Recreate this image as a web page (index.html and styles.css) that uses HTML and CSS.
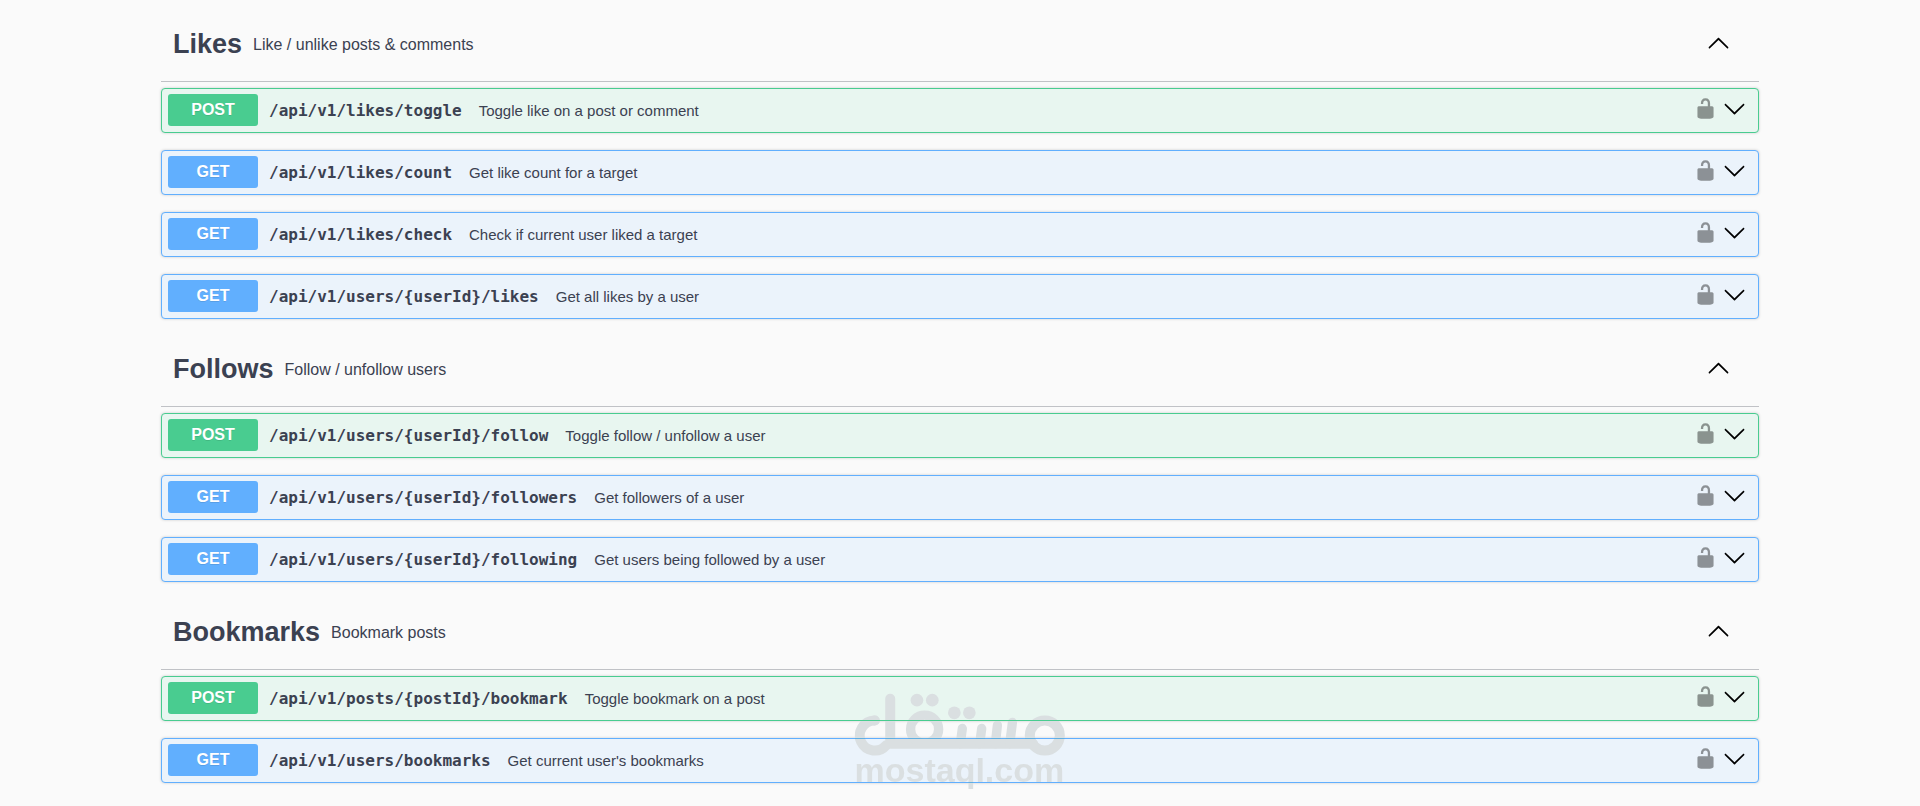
FILE: index.html
```
<!DOCTYPE html>
<html lang="en">

<head>
  <meta charset="UTF-8" />
  <title>API Docs</title>
  <link rel="stylesheet" href="styles.css">
</head>

<body>
  <!-- shared icons -->
  <svg class="sprite" aria-hidden="true">
    <symbol id="arrow-down" viewBox="0 0 20 20">
      <path d="M17.418 6.109c.272-.268.709-.268.979 0s.271.701 0 .969l-7.908 7.83c-.27.268-.707.268-.979 0l-7.908-7.83c-.27-.268-.27-.701 0-.969.271-.268.709-.268.979 0L10 13.25l7.418-7.141z" />
    </symbol>
    <symbol id="arrow-up" viewBox="0 0 20 20">
      <path d="M17.418 14.908c.272.27.709.27.979 0s.271-.701 0-.969l-7.908-7.83c-.27-.268-.707-.268-.979 0l-7.908 7.83c-.27.268-.27.701 0 .969.271.268.709.268.979 0L10 7.767l7.418 7.141z" />
    </symbol>
    <symbol id="unlocked" viewBox="0 0 20 20">
      <path d="M15.8 8H14V5.6C14 2.703 12.665 1 10 1 7.334 1 6 2.703 6 5.6V6h2v-.801C8 3.754 8.797 3 10 3c1.203 0 2 .754 2 2.199V8H4c-.553 0-1 .646-1 1.199V17c0 .549.428 1.139.951 1.307l1.197.387C5.672 18.861 6.55 19 7.1 19h5.8c.549 0 1.428-.139 1.951-.307l1.196-.387c.524-.167.953-.757.953-1.306V9.199C17 8.646 16.352 8 15.8 8z" />
    </symbol>
  </svg>

  <main class="wrapper">
    <section class="tag-section">
      <div class="tag-header">
        <h3>Likes</h3>
        <p>Like / unlike posts &amp; comments</p>
        <button class="icon-btn" aria-label="Collapse Likes"><svg><use href="#arrow-up" /></svg></button>
      </div>
      <div class="opblock post">
        <button class="summary">
          <span class="method">POST</span>
          <span class="path">/api/v1/likes/toggle</span>
          <span class="description">Toggle like on a post or comment</span>
        </button>
        <button class="icon-btn lock" aria-label="Authorize"><svg><use href="#unlocked" /></svg></button>
        <button class="icon-btn" aria-label="Expand"><svg><use href="#arrow-down" /></svg></button>
      </div>
      <div class="opblock get">
        <button class="summary">
          <span class="method">GET</span>
          <span class="path">/api/v1/likes/count</span>
          <span class="description">Get like count for a target</span>
        </button>
        <button class="icon-btn lock" aria-label="Authorize"><svg><use href="#unlocked" /></svg></button>
        <button class="icon-btn" aria-label="Expand"><svg><use href="#arrow-down" /></svg></button>
      </div>
      <div class="opblock get">
        <button class="summary">
          <span class="method">GET</span>
          <span class="path">/api/v1/likes/check</span>
          <span class="description">Check if current user liked a target</span>
        </button>
        <button class="icon-btn lock" aria-label="Authorize"><svg><use href="#unlocked" /></svg></button>
        <button class="icon-btn" aria-label="Expand"><svg><use href="#arrow-down" /></svg></button>
      </div>
      <div class="opblock get">
        <button class="summary">
          <span class="method">GET</span>
          <span class="path">/api/v1/users/{userId}/likes</span>
          <span class="description">Get all likes by a user</span>
        </button>
        <button class="icon-btn lock" aria-label="Authorize"><svg><use href="#unlocked" /></svg></button>
        <button class="icon-btn" aria-label="Expand"><svg><use href="#arrow-down" /></svg></button>
      </div>
    </section>

    <section class="tag-section">
      <div class="tag-header">
        <h3>Follows</h3>
        <p>Follow / unfollow users</p>
        <button class="icon-btn" aria-label="Collapse Follows"><svg><use href="#arrow-up" /></svg></button>
      </div>
      <div class="opblock post">
        <button class="summary">
          <span class="method">POST</span>
          <span class="path">/api/v1/users/{userId}/follow</span>
          <span class="description">Toggle follow / unfollow a user</span>
        </button>
        <button class="icon-btn lock" aria-label="Authorize"><svg><use href="#unlocked" /></svg></button>
        <button class="icon-btn" aria-label="Expand"><svg><use href="#arrow-down" /></svg></button>
      </div>
      <div class="opblock get">
        <button class="summary">
          <span class="method">GET</span>
          <span class="path">/api/v1/users/{userId}/followers</span>
          <span class="description">Get followers of a user</span>
        </button>
        <button class="icon-btn lock" aria-label="Authorize"><svg><use href="#unlocked" /></svg></button>
        <button class="icon-btn" aria-label="Expand"><svg><use href="#arrow-down" /></svg></button>
      </div>
      <div class="opblock get">
        <button class="summary">
          <span class="method">GET</span>
          <span class="path">/api/v1/users/{userId}/following</span>
          <span class="description">Get users being followed by a user</span>
        </button>
        <button class="icon-btn lock" aria-label="Authorize"><svg><use href="#unlocked" /></svg></button>
        <button class="icon-btn" aria-label="Expand"><svg><use href="#arrow-down" /></svg></button>
      </div>
    </section>

    <section class="tag-section">
      <div class="tag-header">
        <h3>Bookmarks</h3>
        <p>Bookmark posts</p>
        <button class="icon-btn" aria-label="Collapse Bookmarks"><svg><use href="#arrow-up" /></svg></button>
      </div>
      <div class="opblock post">
        <button class="summary">
          <span class="method">POST</span>
          <span class="path">/api/v1/posts/{postId}/bookmark</span>
          <span class="description">Toggle bookmark on a post</span>
        </button>
        <button class="icon-btn lock" aria-label="Authorize"><svg><use href="#unlocked" /></svg></button>
        <button class="icon-btn" aria-label="Expand"><svg><use href="#arrow-down" /></svg></button>
      </div>
      <div class="opblock get">
        <button class="summary">
          <span class="method">GET</span>
          <span class="path">/api/v1/users/bookmarks</span>
          <span class="description">Get current user's bookmarks</span>
        </button>
        <button class="icon-btn lock" aria-label="Authorize"><svg><use href="#unlocked" /></svg></button>
        <button class="icon-btn" aria-label="Expand"><svg><use href="#arrow-down" /></svg></button>
      </div>
    </section>
  </main>

  <div class="watermark">
    <svg viewBox="75 38 632 188" fill="none" stroke="currentColor" stroke-width="30" stroke-linecap="round">
      <path d="M135 120A45 45 0 1 0 170 194" />
      <path d="M135 120h1M182 55V190H610" />
      <circle cx="645" cy="165" r="45" />
      <circle cx="285" cy="146" r="42" stroke-width="28" />
      <path d="M398 144l-6 46M456 144l-6 46M503 134l-6 56M548 126l-8 64" stroke-width="28" />
      <g fill="currentColor" stroke="none">
        <circle cx="262" cy="59" r="19" />
        <circle cx="308" cy="59" r="19" />
        <circle cx="374" cy="97" r="19" />
        <circle cx="419" cy="97" r="19" />
      </g>
    </svg>
    <span>mostaql.com</span>
  </div>
</body>

</html>
```
FILE: styles.css
```
body {
  margin: 0;
  background-color: #fafafa;
  color: #3b4151;
  font-family: Arial, "Liberation Sans", sans-serif;
}

.sprite {
  display: none;
}

.wrapper {
  max-width: 1598px;
  margin: 0 auto;
  padding: 11px 20px 0;
}

.tag-header {
  display: flex;
  align-items: center;
  gap: 11px;
  height: 67px;
  padding: 0 29px 3px 12px;
  margin-bottom: 6px;
  border-bottom: 1px solid rgba(59, 65, 81, 0.3);
}

.tag-header h3 {
  margin: 0;
  font-size: 27px;
}

.tag-header p {
  flex: 1;
  margin: 0;
  font-size: 16px;
}

.opblock {
  display: flex;
  align-items: center;
  margin-bottom: 17px;
  padding: 5px 12px 6px 6px;
  border: 1px solid;
  border-radius: 4px;
  box-shadow: 0 0 3px rgba(0, 0, 0, 0.19);
}

.opblock.post {
  border-color: #49cc90;
  background-color: #e8f6f0;
}

.opblock.get {
  border-color: #61affe;
  background-color: #ebf3fb;
}

.summary {
  display: flex;
  flex: 1;
  align-items: center;
  padding: 0;
  border: none;
  background: none;
  color: inherit;
  font-family: inherit;
  text-align: left;
  cursor: pointer;
}

.method {
  width: 90px;
  border-radius: 3px;
  color: #fff;
  font-size: 16px;
  font-weight: bold;
  line-height: 32px;
  text-align: center;
  text-shadow: 0 1px 0 rgba(0, 0, 0, 0.1);
}

.post .method {
  background-color: #49cc90;
}

.get .method {
  background-color: #61affe;
}

.path {
  padding: 0 17px 0 11px;
  font-family: "DejaVu Sans Mono", monospace;
  font-size: 16px;
  font-weight: bold;
}

.description {
  font-size: 15px;
}

.icon-btn {
  padding: 0 0 4px;
  border: none;
  background: none;
  cursor: pointer;
}

.icon-btn svg {
  display: block;
  width: 23px;
  height: 23px;
}

.lock {
  margin-right: 6px;
  opacity: 0.4;
}

/* sits over the list, borders stay visible through it */
.watermark {
  position: fixed;
  bottom: 22px;
  left: 50%;
  transform: translateX(-50%);
  color: #dadfe1;
  mix-blend-mode: darken;
  pointer-events: none;
}

.watermark svg {
  display: block;
  width: 211px;
  height: 63px;
}

.watermark span {
  display: block;
  font-size: 34px;
  font-weight: bold;
  line-height: 28px;
}
```
